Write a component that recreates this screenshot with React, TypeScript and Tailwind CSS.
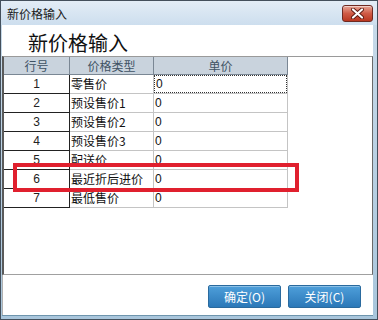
const ROWS = [
  { no: "1", type: "零售价", price: "0" },
  { no: "2", type: "预设售价1", price: "0" },
  { no: "3", type: "预设售价2", price: "0" },
  { no: "4", type: "预设售价3", price: "0" },
  { no: "5", type: "配送价", price: "0" },
  { no: "6", type: "最近折后进价", price: "0" },
  { no: "7", type: "最低售价", price: "0" },
];

const CJK = "font-['SimSun','Noto_Sans_CJK_SC',sans-serif]";

function CloseButton() {
  return (
    <div className="w-[31px] h-[17px] rounded-[3px] border border-[#6e2a22] bg-gradient-to-b from-[#e6a596] via-[#cf5a45] to-[#b9361f] flex items-center justify-center shadow-[inset_0_1px_0_rgba(255,255,255,0.5)]">
      <svg width="13" height="11" viewBox="0 0 13 11">
        <path
          d="M2 1.5 L11 9.5 M11 1.5 L2 9.5"
          stroke="#5a1a12"
          strokeWidth="4"
          strokeLinecap="round"
        />
        <path
          d="M2 1.5 L11 9.5 M11 1.5 L2 9.5"
          stroke="#ffffff"
          strokeWidth="2.2"
          strokeLinecap="round"
        />
      </svg>
    </div>
  );
}

function DialogButton({ label }: { label: string }) {
  return (
    <button className="w-[73px] h-[23px] rounded-[2px] border border-[#2a6a9e] bg-gradient-to-b from-[#4e9fda] to-[#2b78b8] text-white text-[12px] leading-none shadow-[inset_0_1px_0_rgba(255,255,255,0.35)]">
      {label}
    </button>
  );
}

export default function App() {
  return (
    <div
      className={`w-[378px] h-[320px] flex flex-col bg-gradient-to-b from-[#c9dbea] to-[#a9c6dc] border border-[#44505c] overflow-hidden ${CJK}`}
    >
      {/* Title bar */}
      <div className="h-[24px] flex items-start justify-between pl-[6px] pr-[4px] bg-gradient-to-b from-[#e3edf6] to-[#cddeee]">
        <span className="pt-[6px] text-[12px] leading-[14px] text-[#1a1a1a]">
          新价格输入
        </span>
        <div className="pt-[4px]">
          <CloseButton />
        </div>
      </div>

      {/* Client area */}
      <div className="flex-1 ml-[1px] mr-[4px] mb-[3px] bg-white flex flex-col border-b border-[#6e95ad]">
        <div className="h-[31px] pl-[26px] pt-[7px] text-[20px] leading-[22px] text-[#111]">
          新价格输入
        </div>

        {/* Grid panel */}
        <div className="relative h-[219px] border-l-2 border-l-[#5a5a5a] border-t border-t-[#9a9a9a] border-r border-r-[#6a6a6a] border-b border-b-[#a0a0a0]">
          <div className="grid grid-cols-[66px_84px_134px] text-[12px]">
            <div className="h-[18px] bg-[#c9d3dd] border-r border-b border-[#7a8794] text-[#3f5264] flex items-center justify-center">
              行号
            </div>
            <div className="h-[18px] bg-[#c9d3dd] border-r border-b border-[#7a8794] text-[#3f5264] flex items-center justify-center">
              价格类型
            </div>
            <div className="h-[18px] bg-[#c9d3dd] border-r border-b border-[#7a8794] text-[#3f5264] flex items-center justify-center">
              单价
            </div>
            {ROWS.map((r, i) => (
              <div key={r.no} className="contents">
                <div className="h-[19px] border-r border-b border-[#222] flex items-center justify-center text-[#222] font-['Liberation_Sans',sans-serif]">
                  {r.no}
                </div>
                <div className="h-[19px] border-r border-b border-[#c4c4c4] flex items-center pl-[1px] text-[#111] whitespace-nowrap">
                  {r.type}
                </div>
                <div className="h-[19px] border-r border-b border-[#c4c4c4] flex items-center">
                  <div
                    className={`w-full h-full flex items-center pl-[1px] font-['Liberation_Sans',sans-serif] text-[#111] ${
                      i === 0 ? "border border-dotted border-[#333] pl-0" : ""
                    }`}
                  >
                    {r.price}
                  </div>
                </div>
              </div>
            ))}
          </div>

          {/* Highlight marker */}
          <div className="absolute left-[9px] top-[106px] w-[286px] h-[29px] border-[4px] border-[#e0202e]" />
        </div>

        {/* Buttons */}
        <div className="flex-1 flex justify-end items-start gap-[7px] pt-[10px] pr-[12px] border-l border-l-[#b0b0b0]">
          <DialogButton label="确定(O)" />
          <DialogButton label="关闭(C)" />
        </div>
      </div>
    </div>
  );
}
